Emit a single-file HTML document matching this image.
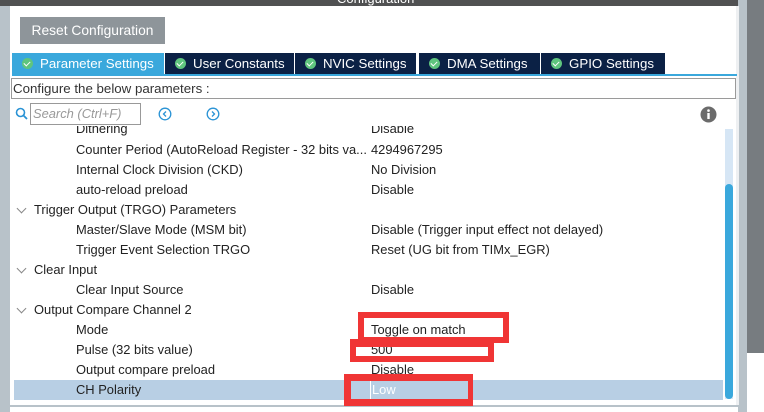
<!DOCTYPE html>
<html><head><style>
*{margin:0;padding:0;box-sizing:border-box}
body{width:764px;height:412px;position:relative;overflow:hidden;background:#fff;font-family:"Liberation Sans",sans-serif;font-size:12.9px;color:#222}
.a{position:absolute}
.tab{position:absolute;top:53px;height:21px;background:#0b2145;color:#fff;font-size:13.3px;line-height:21px;padding-left:10px;white-space:nowrap}
.tab i{display:inline-block;width:11px;height:11px;border-radius:50%;background:#5fc57e;vertical-align:-1px;margin-right:7px;position:relative}
.tab i:after{content:"";position:absolute;left:3px;top:2px;width:3px;height:5px;border:solid #fff;border-width:0 1.5px 1.5px 0;transform:rotate(45deg)}
.r{position:absolute;left:14px;width:709px;height:20px;line-height:20px;white-space:nowrap}
.r .k{position:absolute;left:62px}
.r .g{position:absolute;left:20px}
.r .v{position:absolute;left:357px}
.r .c{position:absolute;left:4px;width:7px;height:7px;border:solid #888;border-width:0 1px 1px 0;transform:rotate(45deg);top:5px}
.box{position:absolute;border:solid #f03535}
</style></head><body>
<div class="a" style="left:0;top:0;width:10px;height:412px;background:#b8c2c9"></div>
<div class="a" style="left:0;top:0;width:740px;height:6px;background:#505152;overflow:hidden"><div style="position:absolute;left:337px;top:-9px;color:#fff;font-size:13px">Configuration</div></div>
<div class="a" style="left:738px;top:0;width:9px;height:412px;background:#b8c2c9"></div>
<div class="a" style="left:736px;top:6px;width:3px;height:400px;background:#eef0f2"></div>
<div class="a" style="left:747px;top:0;width:17px;height:353px;background:#777c80"></div>
<div class="a" style="left:20px;top:17px;width:145px;height:27px;background:#8e959a;color:#fff;font-size:13.8px;line-height:27px;text-align:center">Reset Configuration</div>
<div class="tab" style="left:12px;width:152px;background:#3aa8dc">
<i></i>Parameter Settings</div>
<div class="tab" style="left:165px;width:129px"><i></i>User Constants</div>
<div class="tab" style="left:295px;width:121px"><i></i>NVIC Settings</div>
<div class="tab" style="left:419px;width:121px"><i></i>DMA Settings</div>
<div class="tab" style="left:541px;width:124px"><i></i>GPIO Settings</div>
<div class="a" style="left:12px;top:74px;width:725px;height:2px;background:#3aa8dc"></div>
<div class="a" style="left:11px;top:78px;width:725px;height:21px;border:1px solid #9a9a9a;color:#333;font-size:13.3px;line-height:19px;padding-left:1px">Configure the below parameters :</div>
<svg class="a" style="left:15px;top:107px" width="14" height="14"><circle cx="5.5" cy="5.5" r="4" fill="none" stroke="#2a93d5" stroke-width="1.6"/><line x1="8.5" y1="8.5" x2="12" y2="12" stroke="#2a93d5" stroke-width="1.8"/></svg>
<div class="a" style="left:30px;top:103px;width:111px;height:22px;border:1px solid #999;color:#999;font-style:italic;font-size:12.9px;line-height:20px;padding-left:2px">Search (Ctrl+F)</div>
<svg class="a" style="left:158px;top:107px" width="14" height="14"><circle cx="7" cy="7" r="5.8" fill="none" stroke="#2a93d5" stroke-width="1.3"/><polyline points="8,4.5 5.5,7 8,9.5" fill="none" stroke="#2a93d5" stroke-width="1.3"/></svg>
<svg class="a" style="left:206px;top:107px" width="14" height="14"><circle cx="7" cy="7" r="5.8" fill="none" stroke="#2a93d5" stroke-width="1.3"/><polyline points="6,4.5 8.5,7 6,9.5" fill="none" stroke="#2a93d5" stroke-width="1.3"/></svg>
<svg class="a" style="left:700px;top:106px" width="17" height="17"><circle cx="8.5" cy="8.5" r="8" fill="#6b6b6b"/><rect x="7.3" y="7" width="2.4" height="6" fill="#fff"/><circle cx="8.5" cy="4.6" r="1.3" fill="#fff"/></svg>
<div class="a" style="left:10px;top:126px;width:716px;height:280px;overflow:hidden">
<div style="position:absolute;left:-10px;top:-126px;width:740px;height:420px">
<div class="r" style="top:119px"><span class="k">Dithering</span><span class="v">Disable</span></div>
<div class="r" style="top:140px"><span class="k">Counter Period (AutoReload Register - 32 bits va...</span><span class="v">4294967295</span></div>
<div class="r" style="top:160px"><span class="k">Internal Clock Division (CKD)</span><span class="v">No Division</span></div>
<div class="r" style="top:180px"><span class="k">auto-reload preload</span><span class="v">Disable</span></div>
<div class="r" style="top:200px"><span class="c"></span><span class="g">Trigger Output (TRGO) Parameters</span></div>
<div class="r" style="top:220px"><span class="k">Master/Slave Mode (MSM bit)</span><span class="v">Disable (Trigger input effect not delayed)</span></div>
<div class="r" style="top:240px"><span class="k">Trigger Event Selection TRGO</span><span class="v">Reset (UG bit from TIMx_EGR)</span></div>
<div class="r" style="top:260px"><span class="c"></span><span class="g">Clear Input</span></div>
<div class="r" style="top:280px"><span class="k">Clear Input Source</span><span class="v">Disable</span></div>
<div class="r" style="top:300px"><span class="c"></span><span class="g">Output Compare Channel 2</span></div>
<div class="r" style="top:320px"><span class="k">Mode</span><span class="v">Toggle on match</span></div>
<div class="r" style="top:340px"><span class="k">Pulse (32 bits value)</span><span class="v">500</span></div>
<div class="r" style="top:360px"><span class="k">Output compare preload</span><span class="v">Disable</span></div>
<div class="r" style="top:380px;background:#b8cfe4"><span class="k">CH Polarity</span><span class="v" style="color:#fff;border-left:1px solid #fff;padding-left:1px;left:356px">Low</span></div>
</div></div>
<div class="a" style="left:725px;top:129px;width:8px;height:270px;background:#d6e6f5"></div>
<div class="a" style="left:725px;top:184px;width:8px;height:215px;background:#3aa8dc;border-radius:4px"></div>
<div class="a" style="left:10px;top:405px;width:730px;height:2px;background:#b8c2c9"></div>
<div class="box" style="left:358px;top:312px;width:151px;height:31px;border-width:6px 6px 6px 6px"></div>
<div class="box" style="left:350px;top:339px;width:144px;height:23px;border-width:8px 6px 6px 6px"></div>
<div class="box" style="left:344px;top:374px;width:129px;height:32px;border-width:7px 5px 7px 7px"></div>
</body></html>
